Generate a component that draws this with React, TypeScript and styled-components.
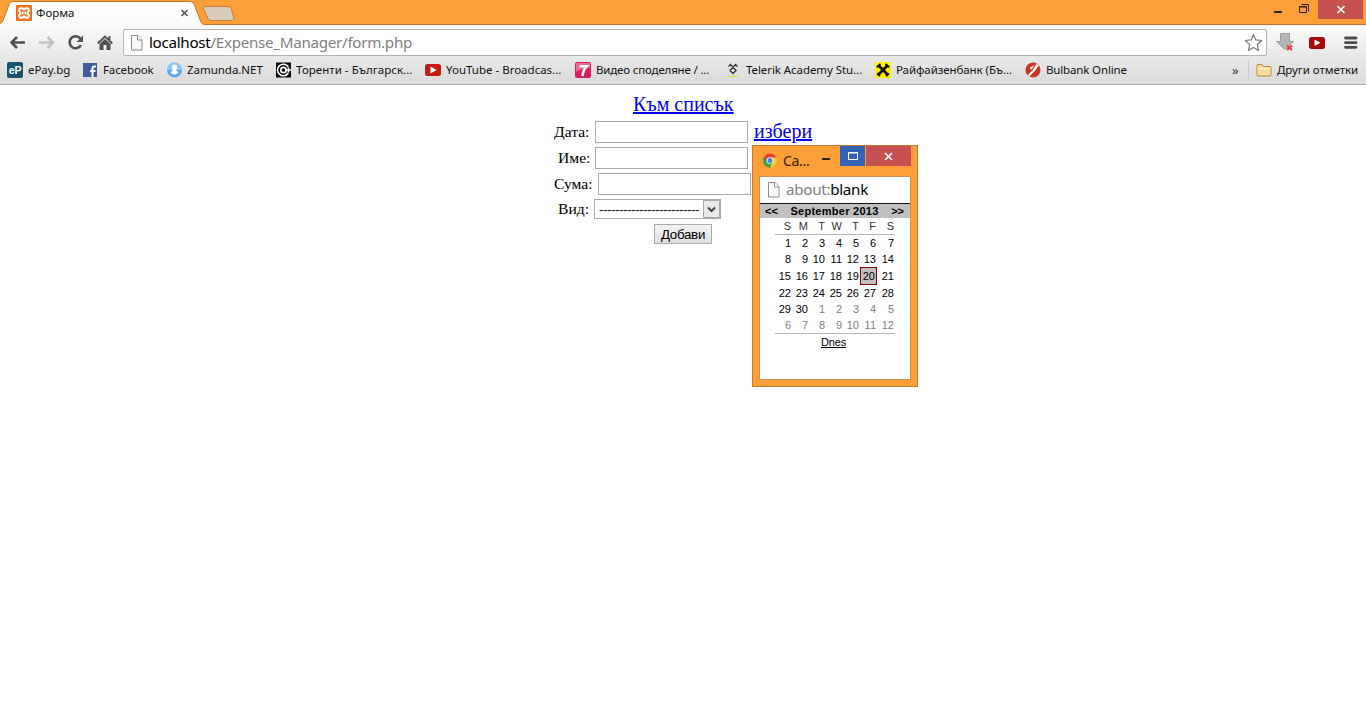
import React from 'react';
import styled, { createGlobalStyle } from 'styled-components';

const Global = createGlobalStyle`
  * { box-sizing: border-box; }
  body { margin: 0; background: #fff; overflow: hidden; }
`;
const ui = '"Noto Sans", "Open Sans", sans-serif';
const orange = '#fc9f38';

const Screen = styled.div`
  position: relative;
  width: 1366px;
  height: 728px;
  background: #fff;
  font-family: ${ui};
  overflow: hidden;
`;
const TabStrip = styled.header`
  height: 25px;
  background: ${orange};
  border-bottom: 1px solid #bf752a;
  display: flex;
`;
const Tab = styled.div`
  position: relative;
  width: 203px;
  height: 25px;
  display: flex;
  align-items: center;
  padding: 1px 0 0 16px;
`;
const TabShape = styled.svg`
  position: absolute;
  left: 0;
  top: 0;
`;
const TabTitle = styled.span`
  position: relative;
  width: 143px;
  margin-left: 4px;
  font-size: 11.5px;
  line-height: 16px;
  color: #111;
`;
const Layered = styled.svg`
  position: relative;
  flex: none;
`;
const NewTab = styled.svg`
  flex: none;
`;
const WindowControls = styled.div`
  margin-left: auto;
  display: flex;
  height: 19px;
`;
const Toolbar = styled.div`
  height: 60px;
  background: linear-gradient(#fafafa, #f0f0f0 30%, #dddddd 90%);
  border-bottom: 1px solid #a7a7a7;
`;
const NavRow = styled.div`
  height: 31px;
  padding: 4px 0 0 0;
  display: flex;
`;
const NavIcons = styled.svg`
  flex: none;
`;
const Omnibox = styled.div`
  width: 1144px;
  height: 27px;
  display: flex;
  align-items: center;
  border: 1px solid #b4b4b4;
  border-radius: 2px;
  background: #fff;
  padding: 0 3px 0 6px;
`;
const Address = styled.span`
  flex: 1;
  margin: -2px 0 0 6px;
  font-size: 15.2px;
  line-height: 20px;
  letter-spacing: -0.3px;
  white-space: nowrap;
  color: #808080;
`;
const Strong = styled.span`
  color: #000;
`;
const Bookmarks = styled.nav`
  height: 28px;
  display: flex;
  align-items: center;
  padding: 0 0 1px 7px;
`;
const Bookmark = styled.a<{ $w: number; $track: number; $gap?: number }>`
  width: ${(p) => p.$w}px;
  flex: none;
  display: flex;
  align-items: center;
  gap: ${(p) => p.$gap ?? 5}px;
  font-size: 11.5px;
  line-height: 16px;
  letter-spacing: ${(p) => p.$track}px;
  white-space: nowrap;
  color: #111;
  svg { flex: none; }
`;
const More = styled.span`
  width: 16px;
  margin-left: auto;
  font-size: 13px;
  line-height: 16px;
  color: #333;
`;
const Divider = styled.i`
  width: 1px;
  height: 19px;
  margin-right: 7px;
  background: #c3ccd4;
`;
const Page = styled.main`
  display: flex;
  flex-direction: column;
  align-items: flex-start;
  font-family: "Liberation Serif", serif;
  font-size: 16px;
`;
const FormRow = styled.div<{ $x: number; $h: number; $line?: number }>`
  height: ${(p) => p.$h}px;
  margin-left: ${(p) => p.$x}px;
  display: flex;
  align-items: flex-start;
  line-height: ${(p) => p.$line ?? 22}px;
`;
const Link = styled.a`
  font-size: 20px;
  line-height: 20px;
  color: #00e;
  text-decoration: underline;
`;
const TopLink = styled(Link)`
  margin-top: 9px;
`;
const FieldLabel = styled.label<{ $w: number }>`
  width: ${(p) => p.$w}px;
  white-space: nowrap;
  font-size: 15.6px;
`;
const TextInput = styled.input`
  width: 153px;
  height: 22px;
  margin: 0 6px 0 0;
  border: 1px solid #a9a9b0;
  background: #fff;
`;
const Select = styled.div`
  width: 127px;
  height: 20px;
  display: flex;
  border: 1px solid #a9a9b0;
  padding-left: 4px;
  font: 13.33px/19px "Liberation Sans", sans-serif;
  letter-spacing: -0.44px;
  svg { flex: none; }
`;
const SelectText = styled.span`
  width: 104px;
  overflow: hidden;
  color: #123;
`;
const Submit = styled.button`
  width: 58px;
  height: 20px;
  padding: 0;
  border: 1px solid #a9a9b0;
  background: linear-gradient(#f4f4f4, #dedede);
  font: 13.33px/17px "Liberation Sans", sans-serif;
  letter-spacing: -0.3px;
  color: #000;
`;
const Popup = styled.section`
  position: absolute;
  left: 752px;
  top: 145px;
  width: 166px;
  height: 242px;
  border: 1px solid #c17b2d;
  background: ${orange};
  padding: 0 6px 6px;
`;
const PopupBar = styled.div`
  height: 30px;
  display: flex;
  padding-left: 4px;
  svg { flex: none; }
`;
const PopupTitle = styled.span`
  width: 33px;
  margin: 5px 0 0 6px;
  font-size: 14px;
  line-height: 20px;
  letter-spacing: -0.3px;
  color: #33200c;
`;
const PopupBody = styled.div`
  height: 204px;
  border: 1px solid #c99252;
  background: #fff;
  display: flex;
  flex-direction: column;
  font-family: "Liberation Sans", sans-serif;
  font-size: 11px;
  color: #000;
`;
const PopupAddress = styled.div`
  height: 27px;
  display: flex;
  align-items: center;
  padding-left: 7px;
  border-bottom: 1px solid #111;
  font-family: ${ui};
`;
const MonthBar = styled.div`
  height: 14px;
  display: flex;
  justify-content: space-between;
  padding: 0 6px 0 5px;
  background: #c0c0c0;
  font-weight: bold;
  line-height: 15px;
`;
const Month = styled.span`
  letter-spacing: 0.27px;
`;
const Calendar = styled.div`
  width: 120px;
  margin-left: 15px;
  display: grid;
  grid-template-columns: repeat(6, 17px) 18px;
  grid-template-rows: 17px 16px 16px 18px 16px 16px 16px;
  border-bottom: 1px solid #b4b4b4;
`;
const Cell = styled.span<{ $kind?: 'head' | 'other' | 'picked' }>`
  display: flex;
  align-items: center;
  justify-content: flex-end;
  padding-right: 1px;
  color: ${(p) => (p.$kind === 'other' ? '#808080' : p.$kind === 'head' ? '#333' : '#000')};
  border: ${(p) => (p.$kind === 'picked' ? '1px solid #800000' : '0')};
  border-bottom: ${(p) => (p.$kind === 'head' ? '1px solid #b4b4b4' : '')};
  background: ${(p) => (p.$kind === 'picked' ? '#c0c0c0' : 'none')};
`;
const Today = styled.a`
  margin: 2px 0 0 61px;
  line-height: 13px;
  letter-spacing: -0.15px;
  text-decoration: underline;
`;

const FileIcon = () => (
  <svg width="13" height="16" viewBox="0 0 13 16">
    <path d="M1.500.5H8l4 4v10.500H1.500z" fill="#f7f7f7" stroke="#8c8c8c" />
    <path d="M7.500.5V5H12" fill="#fff" stroke="#8c8c8c" />
  </svg>
);
const Xampp = () => (
  <Layered width="16" height="16" viewBox="0 0 16 16">
    <rect width="16" height="16" rx="1" fill="#e8681c" />
    <rect x="1" y="1" width="14" height="14" fill="#f47a26" />
    <path d="M5 3.300h1.200L8 4.800l1.800-1.500H11q1.700 0 1.700 1.700v1.200L11.500 8l1.200 1.800V11q0 1.700-1.700 1.700H9.800L8 11.200l-1.800 1.500H5q-1.700 0-1.700-1.700V9.800L4.500 8 3.300 6.200V5q0-1.700 1.700-1.700z" fill="none" stroke="#fff" strokeWidth="1.900" />
    <path d="M6.500 6.500v3M9.500 6.500v3M6 8h4" stroke="#fff" strokeWidth="1.200" />
  </Layered>
);
const icons: Record<string, React.ReactNode> = {
  epay: (<><rect width="16" height="16" rx="2" fill="#17536d" /><text x="8" y="11.500" textAnchor="middle" fontFamily="Liberation Sans" fontWeight="bold" fontSize="10.500" fill="#fff">eP</text></>),
  fb: (<><rect x="0" y="1" width="14" height="14" fill="#3f5b9b" /><path d="M13 4.500h-1.500Q9.500 4.500 9.500 6.500V15M7 9h5.500" fill="none" stroke="#fff" strokeWidth="2" /></>),
  zam: (<><circle cx="7.500" cy="8" r="7.500" fill="#5aa6f1" /><path d="M0 8a7.500 7.500 0 0 1 15 0z" fill="#8ec4f8" /><path d="M7.500 2.500q-2.500 0-2.500 3l.8 3.200L3.500 10Q4 12.500 6 12l1.500 1L9 12q2 .5 2.500-2L9.200 8.700 10 5.500q0-3-2.500-3z" fill="#fff" /></>),
  tor: (<><rect width="15" height="15" y="0.500" fill="#0a0a0a" /><path d="M12.300 5A5.800 5.800 0 1 0 12.300 11" fill="none" stroke="#fff" strokeWidth="1.500" /><circle cx="7.500" cy="8" r="2.700" fill="none" stroke="#fff" strokeWidth="1.700" /><path d="M9 8h6M12.500 5.500V10.500" stroke="#fff" strokeWidth="1.600" /></>),
  yt: (<><rect y="2" width="16" height="12" rx="2.500" fill="#c31b16" /><path d="M5.500 4.500v7l6-3.500z" fill="#fff" /></>),
  seven: (<><rect width="16" height="16" rx="2" fill="#dc1b5c" /><path d="M1 1h14v5Q7 6 1 10z" fill="#ef6795" /><path d="M4.500 4.200h7.300q-3.800 4-4.300 10" fill="none" stroke="#fff" strokeWidth="2.600" /></>),
  telerik: (<><path d="M3.500 4.500l2-2L11 8.500l-3 3-3-3 5.500-6 2 2" fill="none" stroke="#3c3c3c" strokeWidth="1.400" /><path d="M3 14.500h10" stroke="#c8ea28" /></>),
  raif: (<><rect width="16" height="16" fill="#fff000" /><path d="M4 4l8.500 8.500M12 4l-8.500 8.500" stroke="#111" strokeWidth="2.800" /><path d="M1.800 5.200L5.500 2M10.500 2l3.700 3.200M2 11.500l3 2.500M14 11.500L11 14" stroke="#111" strokeWidth="2" /></>),
  bul: (<><circle cx="8" cy="8" r="7.500" fill="#cf3527" /><path d="M2.800 13.200Q8 9 11.500 2l2.300 1.300Q10 10 4.500 14.500z" fill="#fff" /><path d="M5 5.500l4.500-2.300L6 8z" fill="#fff" /></>),
  folder: (<><path d="M1 13V3.500Q1 2.500 2 2.500h4l1.500 2H14q1 0 1 1V13q0 1-1 1H2q-1 0-1-1z" fill="#fbdc98" stroke="#b8893c" /><path d="M1.500 6.500h13" stroke="#fff2cc" /></>),
};
const Fav = ({ name }: { name: string }) => (
  <svg width="16" height="16" viewBox="0 0 16 16">{icons[name]}</svg>
);

const bookmarks: [string, string, number, number, number?][] = [
  ['epay', 'ePay.bg', 76, -0.05],
  ['fb', 'Facebook', 84, -0.12, 4],
  ['zam', 'Zamunda.NET', 109, -0.03, 4],
  ['tor', 'Торенти - Българск...', 149, 0.03, 4],
  ['yt', 'YouTube - Broadcas...', 150, 0],
  ['seven', 'Видео споделяне / ...', 150, -0.17],
  ['telerik', 'Telerik Academy Stu...', 150, -0.07],
  ['raif', 'Райфайзенбанк (Бъ...', 150, -0.08],
  ['bul', 'Bulbank Online', 110, -0.15],
];

const days = [...Array.from({ length: 30 }, (_, i) => i + 1), ...Array.from({ length: 12 }, (_, i) => i + 1)];

export default function App() {
  return (
    <Screen>
      <Global />
      <TabStrip>
        <Tab>
          <TabShape width="204" height="25" viewBox="0 0 204 25">
            <defs><linearGradient id="tab" x2="0" y2="1"><stop stopColor="#fff" /><stop offset="1" stopColor="#fafafa" /></linearGradient></defs>
            <path d="M0 25v-1.500Q2 23 3 20.500L9 4.500Q10 1.500 13 1.500H190Q193 1.500 194.200 4.500L200.500 21Q201.500 24 204 24.500V25z" fill="url(#tab)" />
            <path d="M0 23.500Q2 23 3 20.500L9 4.500Q10 1.500 13 1.500H190Q193 1.500 194.200 4.500L200.500 21Q201.500 24 204 24.500" fill="none" stroke="#bf752a" />
          </TabShape>
          <Xampp />
          <TabTitle>Форма</TabTitle>
          <Layered width="11" height="11" viewBox="0 0 11 11"><path d="M2.500 2l6 6M8.500 2l-6 6" stroke="#555" strokeWidth="1.600" /></Layered>
        </Tab>
        <NewTab width="34" height="24" viewBox="0 0 34 24">
          <path d="M1.500 6.500H25q2 0 3 2l3 9.500q.5 2.500-1.500 2.500H8q-2 0-3-2L.500 9Q-.5 6.500 1.500 6.500z" fill="#d8cbb9" stroke="#c1803c" />
        </NewTab>
        <WindowControls>
          <svg width="96" height="19" viewBox="0 0 96 19">
            <path d="M4 12h8" stroke="#2b2014" strokeWidth="2" />
            <path d="M29.500 6.500h7v6h-7z M29 7h8M31.500 4.500h7v7" fill="none" stroke="#2b2014" />
            <path d="M48 0h45v19H48z" fill="#c75050" />
            <path d="M67.500 6l7 7M74.500 6l-7 7" stroke="#fff" strokeWidth="1.600" />
          </svg>
        </WindowControls>
      </TabStrip>
      <Toolbar>
        <NavRow>
          <NavIcons width="123" height="27" viewBox="0 29 123 27">
            <path d="M25 42.500H12M17 37l-5.500 5.500L17 48" fill="none" stroke="#505050" strokeWidth="2.600" />
            <path d="M39 42.500h13M47.500 37l5.500 5.500-5.500 5.500" fill="none" stroke="#c3c3c3" strokeWidth="2.600" />
            <path d="M80.300 38.500A6 6 0 1 0 81 45" fill="none" stroke="#505050" strokeWidth="2.600" />
            <path d="M83 35.500v6.500h-6.500z" fill="#505050" />
            <path d="M97.700 43.500L105 36.500l7.300 7M109.500 36v4" fill="none" stroke="#505050" strokeWidth="1.900" />
            <path d="M99.500 44l5.500-5 5.500 5v6h-4v-5h-3v5h-4z" fill="#505050" />
          </NavIcons>
          <Omnibox>
            <FileIcon />
            <Address><Strong>localhost</Strong>/Expense_Manager/form.php</Address>
            <svg width="19" height="19" viewBox="0 0 19 19"><path d="M9.500 1.500l2.400 5.400 5.800.6-4.400 4 1.200 5.900-5-3-5 3 1.200-5.900-4.400-4 5.800-.6z" fill="#fff" stroke="#7b7b7b" strokeWidth="1.200" strokeLinejoin="round" /></svg>
          </Omnibox>
          <NavIcons width="99" height="27" viewBox="1267 29 99 27">
            <path d="M1280.500 33.500h9v8h4l-8.500 8-8.500-8h4z" fill="#b4b7ba" stroke="#999da1" />
            <path d="M1287 45.500l5 4.500M1292 45.500l-5 4.500" stroke="#e33c3c" strokeWidth="2" />
            <rect x="1309" y="37" width="16" height="12" rx="2.500" fill="#a30b0b" />
            <path d="M1314.500 39.500v6.500l6-3.300z" fill="#fff" />
            <path d="M1345.500 38h10.500M1345.500 42.700h10.500M1345.500 47.300h10.500" stroke="#4d4d4d" strokeWidth="2.800" strokeLinecap="round" />
          </NavIcons>
        </NavRow>
        <Bookmarks>
          {bookmarks.map(([icon, text, w, track, gap]) => (
            <Bookmark key={icon} $w={w} $track={track} $gap={gap}><Fav name={icon} />{text}</Bookmark>
          ))}
          <More>»</More>
          <Divider />
          <Bookmark $w={110} $track={-0.05}><Fav name="folder" />Други отметки</Bookmark>
        </Bookmarks>
      </Toolbar>
      <Page>
        <FormRow $x={633} $h={36}><TopLink>Към списък</TopLink></FormRow>
        <FormRow $x={554} $h={26}><FieldLabel $w={41}>Дата:</FieldLabel><TextInput /><Link>избери</Link></FormRow>
        <FormRow $x={558} $h={26}><FieldLabel $w={37}>Име:</FieldLabel><TextInput /></FormRow>
        <FormRow $x={554} $h={26}><FieldLabel $w={44}>Сума:</FieldLabel><TextInput /></FormRow>
        <FormRow $x={558} $h={25} $line={20}>
          <FieldLabel $w={36}>Вид:</FieldLabel>
          <Select>
            <SelectText>-------------------------</SelectText>
            <svg width="17" height="18" viewBox="0 0 17 18"><path d="M.5.500h16v17H.5z" fill="#e9e9e9" stroke="#a9a9b0" /><path d="M5 7.500L8.500 11 12 7.500" fill="none" stroke="#444" strokeWidth="2" /></svg>
          </Select>
        </FormRow>
        <FormRow $x={654} $h={20}><Submit>Добави</Submit></FormRow>
      </Page>
      <Popup>
        <PopupBar>
          <svg width="14" height="28" viewBox="0 0 14 28">
            <circle cx="7" cy="14.500" r="7" fill="#e44134" />
            <path d="M.9 11A7 7 0 0 0 7 21.500l3-5.500-5.500.5z" fill="#3ba64c" />
            <path d="M7 21.500A7 7 0 0 0 13.400 11.500H8l2 4z" fill="#fbd024" />
            <circle cx="7" cy="14.500" r="3.300" fill="#fff" /><circle cx="7" cy="14.500" r="2.500" fill="#4583d8" />
          </svg>
          <PopupTitle>Ca...</PopupTitle>
          <svg width="95" height="20" viewBox="0 0 95 20">
            <path d="M6 13h8" stroke="#2b2014" strokeWidth="2" />
            <path d="M24 0h25v20H24z" fill="#3465b5" /><path d="M50 0h45v20H50z" fill="#c75050" />
            <path d="M32.500 6.500h9v7h-9z M32 7h10" fill="none" stroke="#fff" />
            <path d="M69 7l7 7M76 7l-7 7" stroke="#fff" strokeWidth="1.600" />
          </svg>
        </PopupBar>
        <PopupBody>
          <PopupAddress><FileIcon /><Address>about:<Strong>blank</Strong></Address></PopupAddress>
          <MonthBar><span>&lt;&lt;</span><Month>September 2013</Month><span>&gt;&gt;</span></MonthBar>
          <Calendar>
            {[...'SMTWTFS'].map((d, i) => <Cell key={'h' + i} $kind="head">{d}</Cell>)}
            {days.map((d, i) => <Cell key={i} $kind={i === 19 ? 'picked' : i > 29 ? 'other' : undefined}>{d}</Cell>)}
          </Calendar>
          <Today>Dnes</Today>
        </PopupBody>
      </Popup>
    </Screen>
  );
}
